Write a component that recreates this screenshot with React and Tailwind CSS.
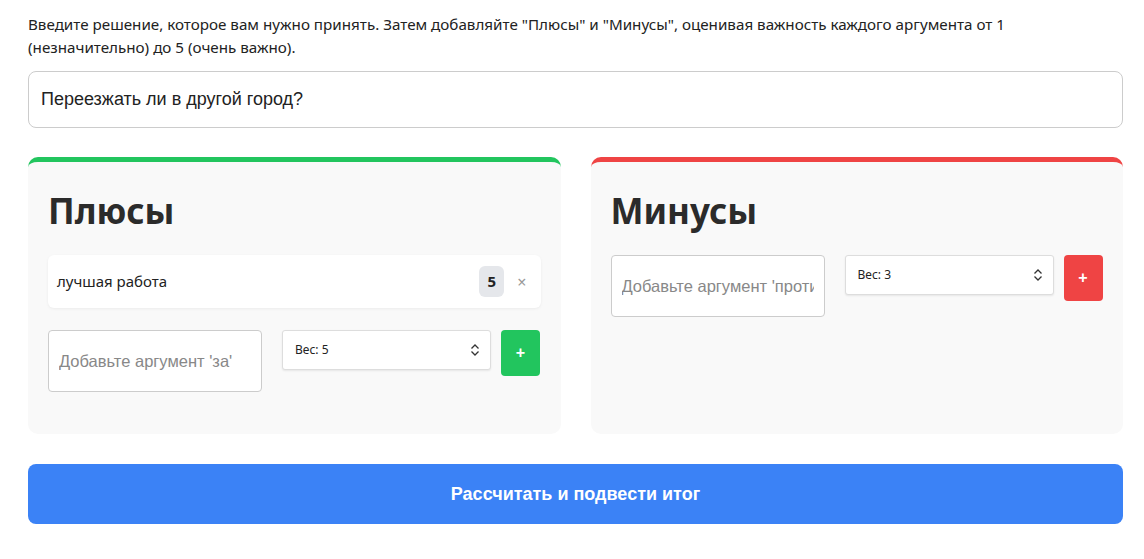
import React, { useState } from "react";

function Chevrons() {
  return (
    <svg width="10" height="14" viewBox="0 0 10 14" fill="none" stroke="#333" strokeWidth="1.3">
      <path d="M1.5 5.5 L5 2 L8.5 5.5" />
      <path d="M1.5 8.5 L5 12 L8.5 8.5" />
    </svg>
  );
}

function Column({ title, color, btn, items, placeholder, weight }) {
  return (
    <section className={`bg-[#f9f9f9] rounded-[10px] border-t-[5px] ${color} px-5 pt-[22px] pb-[42px]`}>
      <h2 className="text-[35px] font-bold text-[#2b2b2b] leading-[54px] mb-[17px] font-['Noto_Sans',sans-serif]">
        {title}
      </h2>
      {items.length > 0 && (
        <ul className="mb-[22px]">
          {items.map((it) => (
            <li key={it.text} className="bg-white rounded-md shadow-[0_1px_3px_rgba(0,0,0,0.06)] h-[53px] flex items-center pl-[9px] pr-[14px]">
              <span className="flex-1 text-[15px] text-[#222] font-['Noto_Sans',sans-serif]">{it.text}</span>
              <span className="bg-[#e5e7eb] rounded-md w-[25px] h-[31px] flex items-center justify-center font-bold text-[15px] text-[#222] font-['Noto_Sans',sans-serif]">
                {it.weight}
              </span>
              <span className="ml-[13px] text-[#999] text-[16px] leading-none">×</span>
            </li>
          ))}
        </ul>
      )}
      <div className={`flex items-start ${items.length ? "" : "mt-[4px]"}`}>
        <input
          placeholder={placeholder}
          className="w-[214px] h-[62px] bg-white border border-[#ccc] rounded-[4px] px-[10px] text-[16.5px] font-['Liberation_Sans',Arial,sans-serif] placeholder:text-[#888] outline-none"
        />
        <div className="ml-5 w-[209px] h-[40px] bg-white border border-[#ddd] rounded-[3px] shadow-[0_1px_2px_rgba(0,0,0,0.08)] flex items-center justify-between pl-3 pr-[10px]">
          <span className="text-[12px] text-[#222] font-['Noto_Sans',sans-serif]">Вес: {weight}</span>
          <Chevrons />
        </div>
        <button className={`ml-[10px] w-[39px] h-[46px] ${btn} rounded-[4px] text-white font-bold text-[16px] flex items-center justify-center font-['Liberation_Sans',Arial,sans-serif]`}>
          +
        </button>
      </div>
    </section>
  );
}

export default function App() {
  const [decision, setDecision] = useState("Переезжать ли в другой город?");
  return (
    <div className="bg-white min-h-screen pl-7 pr-[21px] pt-[13px]">
      <p className="text-[15.2px] leading-[23px] text-[#222] font-['Noto_Sans',sans-serif]">
        Введите решение, которое вам нужно принять. Затем добавляйте "Плюсы" и "Минусы", оценивая важность каждого аргумента от 1
        (незначительно) до 5 (очень важно).
      </p>
      <input
        value={decision}
        onChange={(e) => setDecision(e.target.value)}
        className="mt-[12px] w-full h-[57px] border border-[#ccc] rounded-lg px-3 text-[18px] text-[#222] font-['Liberation_Sans',Arial,sans-serif] outline-none"
      />
      <div className="grid grid-cols-2 gap-[30px] mt-[29px]">
        <Column
          title="Плюсы"
          color="border-[#22c55e]"
          btn="bg-[#22c55e]"
          items={[{ text: "лучшая работа", weight: 5 }]}
          placeholder="Добавьте аргумент 'за'"
          weight={5}
        />
        <Column
          title="Минусы"
          color="border-[#ef4444]"
          btn="bg-[#ef4444]"
          items={[]}
          placeholder="Добавьте аргумент 'против'"
          weight={3}
        />
      </div>
      <button className="mt-[30px] w-full h-[60px] bg-[#3b82f6] rounded-lg text-white font-bold text-[18px] font-['Liberation_Sans',Arial,sans-serif]">
        Рассчитать и подвести итог
      </button>
    </div>
  );
}
